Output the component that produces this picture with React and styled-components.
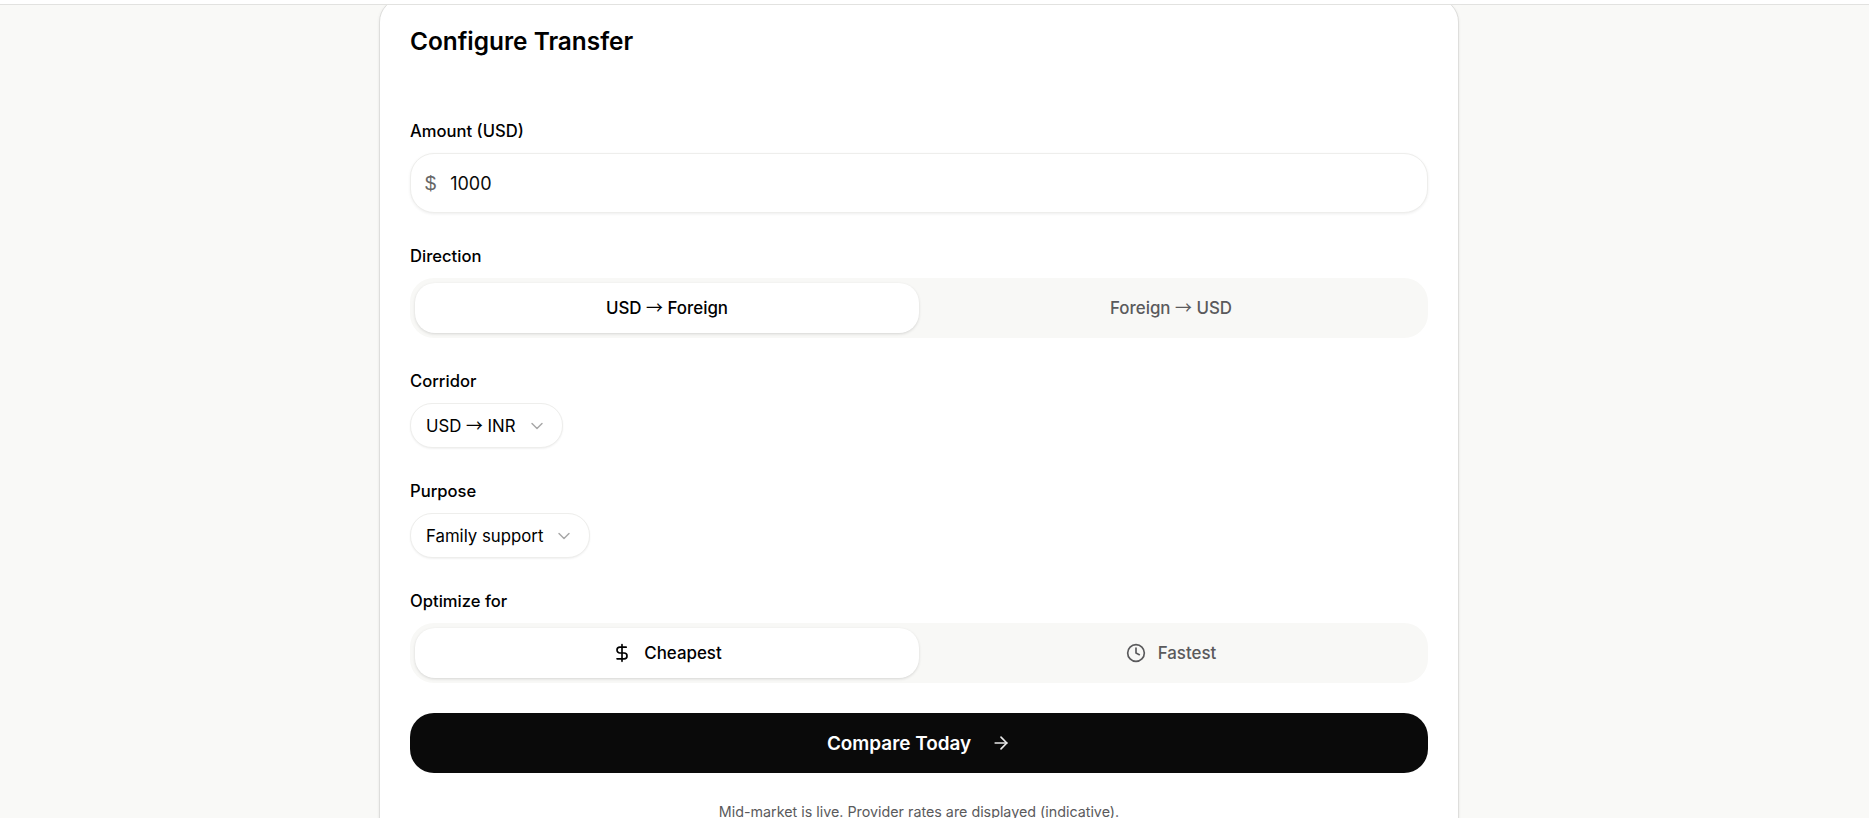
import React from "react";
import styled, { createGlobalStyle } from "styled-components";
import { DollarSign, Clock, ChevronDown, ArrowRight } from "lucide-react";

const Global = createGlobalStyle`
  html, body { margin: 0; height: 100%; overflow: hidden; background: #f9f9f7; }
  * { box-sizing: border-box; }
  body { font-family: Inter, "Liberation Sans", sans-serif; color: #0a0a0a; }
`;
const Page = styled.div`
  height: 818px; overflow: hidden; background: #f9f9f7;
`;
const Header = styled.header`
  position: relative; z-index: 1; height: 5px; background: #fff; border-bottom: 1px solid #e2e2e0;
`;
const Card = styled.section`
  width: 1080px; height: 900px; margin: -7px 0 0 379px; background: #fff;
  border: 1px solid #dededc; border-radius: 24px; padding: 26px 30px 40px;
  box-shadow: 0 1px 3px rgba(0,0,0,.08);
`;
const Title = styled.h2`
  margin: 0 0 62px; font-size: 24.4px; line-height: 32px; font-weight: 600; color: #000;
`;
const Form = styled.div`
  display: flex; flex-direction: column; gap: 31px;
`;
const Field = styled.div`
  display: flex; flex-direction: column; align-items: flex-start; gap: 10px;
`;
const Label = styled.label`
  font-size: 16.6px; line-height: 24px; font-weight: 500; color: #000;
`;
const AmountBox = styled.div`
  width: 100%; height: 60px; border: 1px solid #eeeeec; border-radius: 24px; background: #fff;
  display: flex; align-items: center; gap: 14px; padding: 0 14px;
  box-shadow: 0 1px 3px rgba(0,0,0,.07);
`;
const Currency = styled.span`
  font: 400 20px "Liberation Sans", sans-serif; color: #666;
`;
const AmountValue = styled.span`
  color: #0a0a0a; font-size: 18px;
`;
const Segmented = styled.div`
  width: 100%; height: 60px; background: #f8f8f6; border-radius: 24px; padding: 5px;
  display: grid; grid-template-columns: 1fr 1fr;
`;
const Segment = styled.div`
  border-radius: 20px; display: flex; align-items: center; justify-content: center; gap: 12px;
  font-size: 16.9px; font-weight: 500;
  color: ${p => (p.$active ? "#000" : "#5a5a5c")};
  background: ${p => (p.$active ? "#fff" : "transparent")};
  box-shadow: ${p => (p.$active ? "0 1px 3px rgba(0,0,0,.14)" : "none")};
`;
const Arrow = styled.span`
  font-family: "Noto Sans CJK JP", sans-serif; font-weight: 400; line-height: 1;
`;
const Select = styled.div`
  height: 45px; border: 1px solid #eeeeec; border-radius: 22px; padding: 0 15px; background: #fff;
  display: flex; align-items: center; gap: 11px; font-size: 16.8px; line-height: 24px; color: #000;
  box-shadow: 0 1px 2px rgba(0,0,0,.06);
  svg { color: #a8a8a8; }
`;
const Cta = styled.button`
  width: 100%; height: 60px; margin-top: -1px; border: 0; border-radius: 24px; background: #0a0a0a; color: #fff;
  display: flex; align-items: center; justify-content: center; gap: 20px;
  font: 600 18.9px Inter, sans-serif;
  svg { color: #e8e8e8; }
`;
const Note = styled.p`
  margin: -2px 0 0; text-align: center; font-size: 14.3px; line-height: 20px; color: #5a5a5c;
`;

export default function App() {
  return (
    <>
      <Global />
      <Page>
        <Header />
        <Card>
          <Title>Configure Transfer</Title>
          <Form>
            <Field>
              <Label>Amount (USD)</Label>
              <AmountBox><Currency>$</Currency><AmountValue>1000</AmountValue></AmountBox>
            </Field>
            <Field>
              <Label>Direction</Label>
              <Segmented>
                <Segment $active><span>USD <Arrow>→</Arrow> Foreign</span></Segment>
                <Segment><span>Foreign <Arrow>→</Arrow> USD</span></Segment>
              </Segmented>
            </Field>
            <Field>
              <Label>Corridor</Label>
              <Select><span>USD <Arrow>→</Arrow> INR</span> <ChevronDown size={20} strokeWidth={1.75} /></Select>
            </Field>
            <Field>
              <Label>Purpose</Label>
              <Select>Family support <ChevronDown size={20} strokeWidth={1.75} /></Select>
            </Field>
            <Field>
              <Label>Optimize for</Label>
              <Segmented>
                <Segment $active><DollarSign size={20} /> Cheapest</Segment>
                <Segment><Clock size={20} /> Fastest</Segment>
              </Segmented>
            </Field>
            <Cta>Compare Today <ArrowRight size={20} /></Cta>
            <Note>Mid-market is live. Provider rates are displayed (indicative).</Note>
          </Form>
        </Card>
      </Page>
    </>
  );
}
